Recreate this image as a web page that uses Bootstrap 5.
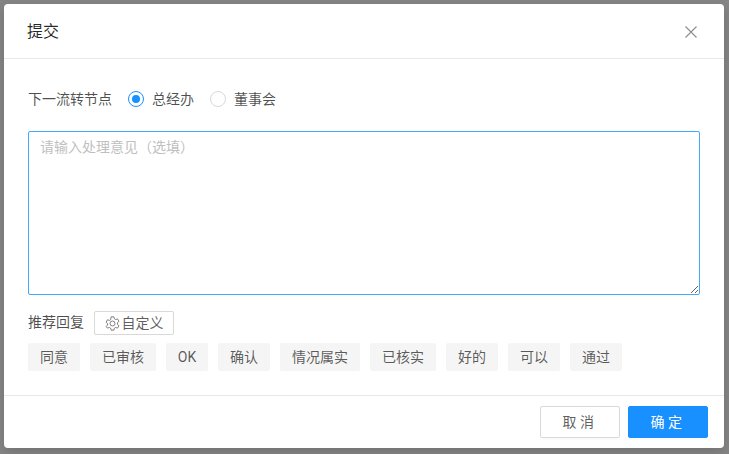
<!DOCTYPE html>
<html lang="zh">
<head>
<meta charset="utf-8">
<title>提交</title>
<link href="https://cdn.jsdelivr.net/npm/bootstrap@5.3.0/dist/css/bootstrap.min.css" rel="stylesheet">
<style>
html,body{height:100%;overflow:hidden}
body{background:#858585;padding:4px 5px 6px 4px;font-family:Roboto,"Noto Sans CJK SC",sans-serif;font-size:14px;color:rgba(0,0,0,.65)}
.dlg{width:720px;height:444px;border:0;border-radius:4px;background:#fff;box-shadow:0 4px 12px rgba(0,0,0,.15)}
.dlg-head{height:55px;padding:2px 27px 0 23px;border-bottom:1px solid #e8e8e8;border-radius:0}
.dlg-title{font-size:16px;font-weight:400;color:rgba(0,0,0,.85);line-height:22px;margin:0}
.dlg-close{width:12px;height:12px;color:#8c8c8c;line-height:0;border:0;background:none;padding:0}
.dlg-body{padding:29px 24px 0;flex:1 1 auto}
.flow-row{height:22px;line-height:22px;color:rgba(0,0,0,.7)}
.flow-label{margin-right:16px}
.choice{margin-right:16px;gap:8px}
.choice-dot{width:16px;height:16px;border-radius:50%;border:1px solid #d9d9d9;background:#fff;display:block;flex:none}
.choice-dot.is-on{border-color:#1890ff;position:relative}
.choice-dot.is-on::after{content:"";position:absolute;left:3px;top:3px;width:8px;height:8px;border-radius:50%;background:#1890ff}
.memo{display:block;width:672px;height:164px;margin-top:21px;padding:5px 11px;border:1px solid #40a9ff;border-radius:2px;font-size:14px;line-height:20px;color:rgba(0,0,0,.65);outline:0;resize:vertical;font-family:inherit}
.memo::placeholder{color:#bfbfbf;opacity:1}
.reply-head{margin-top:16px;height:24px;gap:10px;color:rgba(0,0,0,.7)}
.reply-label{line-height:20px;margin-top:-2px}
.custom-btn{height:24px;width:80px;padding:0;border:1px solid #d9d9d9;border-radius:2px;background:#fff;color:rgba(0,0,0,.65);font-size:14px;line-height:22px;gap:2px}
.custom-btn svg{color:#737373}
.tag-row{gap:10px;margin-top:8px}
.reply-tag{height:28px;line-height:28px;padding:0 12px;background:#f5f5f5;border-radius:2px;color:rgba(0,0,0,.65);font-size:14px}
.tag-latin{width:42px;padding:0;text-align:center}
.dlg-foot{height:53px;padding:10px 16px 10px 0;border-top:1px solid #e8e8e8;gap:8px;border-radius:0}
.act-btn{width:80px;height:32px;padding:0;border-radius:2px;font-size:14px;line-height:30px;letter-spacing:.25em;box-shadow:0 2px 0 rgba(0,0,0,.015)}
.act-plain{background:#fff;border:1px solid #d9d9d9;color:rgba(0,0,0,.65)}
.act-main{background:#1890ff;border:1px solid #1890ff;color:#fff}
</style>
</head>
<body>
<div class="modal-content dlg d-flex flex-column">
  <div class="modal-header dlg-head d-flex align-items-center justify-content-between">
    <h5 class="dlg-title">提交</h5>
    <button type="button" class="dlg-close" aria-label="Close">
      <svg width="12" height="12" viewBox="0 0 12 12" fill="none" stroke="currentColor" stroke-width="1.1"><path d="M.5.5l11 11M11.5.5l-11 11"/></svg>
    </button>
  </div>
  <div class="dlg-body">
    <div class="flow-row d-flex align-items-center">
      <span class="flow-label">下一流转节点</span>
      <span class="choice d-flex align-items-center"><span class="choice-dot is-on"></span><span>总经办</span></span>
      <span class="choice d-flex align-items-center"><span class="choice-dot"></span><span>董事会</span></span>
    </div>
    <textarea class="memo" placeholder="请输入处理意见（选填）"></textarea>
    <div class="reply-head d-flex align-items-center">
      <span class="reply-label">推荐回复</span>
      <button type="button" class="custom-btn d-flex align-items-center justify-content-center">
        <svg width="15" height="15" viewBox="0 0 14 14" fill="none" stroke="currentColor" stroke-width=".85"><circle cx="7" cy="7" r="2.3"/><path d="M5.7.8h2.6l.4 1.8 1.2.7 1.8-.6 1.3 2.3-1.4 1.2v1.6l1.4 1.2-1.3 2.3-1.8-.6-1.2.7-.4 1.8H5.7l-.4-1.8-1.2-.7-1.8.6L1 9.8l1.4-1.2V7L1 5.8l1.3-2.3 1.8.6 1.2-.7z" stroke-linejoin="round"/></svg>
        <span>自定义</span>
      </button>
    </div>
    <div class="tag-row d-flex">
      <span class="reply-tag">同意</span>
      <span class="reply-tag">已审核</span>
      <span class="reply-tag tag-latin">OK</span>
      <span class="reply-tag">确认</span>
      <span class="reply-tag">情况属实</span>
      <span class="reply-tag">已核实</span>
      <span class="reply-tag">好的</span>
      <span class="reply-tag">可以</span>
      <span class="reply-tag">通过</span>
    </div>
  </div>
  <div class="modal-footer dlg-foot d-flex justify-content-end">
    <button type="button" class="act-btn act-plain m-0">取消</button>
    <button type="button" class="act-btn act-main m-0">确定</button>
  </div>
</div>
<script src="https://cdn.jsdelivr.net/npm/bootstrap@5.3.0/dist/js/bootstrap.bundle.min.js"></script>
</body>
</html>
